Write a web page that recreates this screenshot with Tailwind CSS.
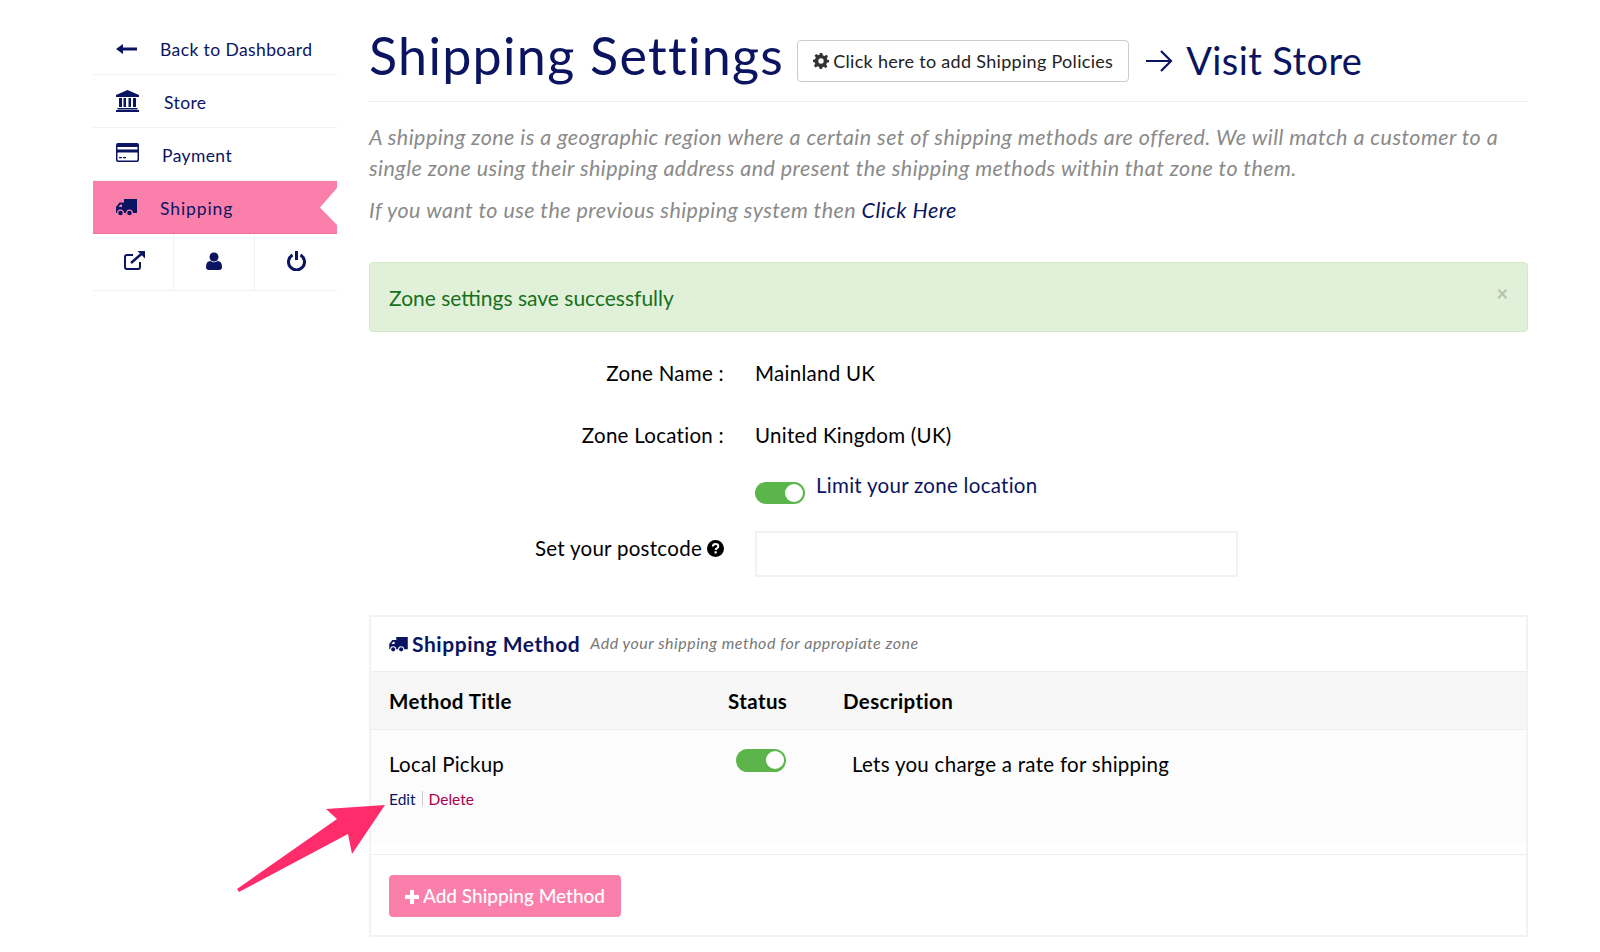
<!DOCTYPE html>
<html lang="en">
<head>
    <meta charset="UTF-8">
    <title>Shipping Settings</title>
    <script src="https://cdn.jsdelivr.net/npm/@tailwindcss/browser@4"></script>
</head>
<body class="bg-white font-['Lato','Liberation_Sans',sans-serif] text-[#000] h-[952px] overflow-hidden relative">
    <div class="flex pl-[93px]">
        <!-- sidebar -->
        <div class="w-[244px] pt-[24px] text-[#0b1460] text-[17.5px] tracking-[0.4px] shrink-0">
            <div class="h-[51px] border-b border-[#f2f2f2] flex items-center pl-[23px]">
                <svg class="w-[21px] h-[12px] mr-[23px]" viewBox="0 0 21 12" fill="#0b1460"><path d="M0 6 L7 1 V4.500 H21 V7.500 H7 V11 Z"/></svg>
                <span class="mt-[2px]">Back to Dashboard</span>
            </div>
            <div class="h-[53px] border-b border-[#f2f2f2] flex items-center pl-[23px]">
                <svg class="w-[23px] h-[22px] mr-[25px]" viewBox="0 0 23 22" fill="#0b1460"><path d="M11.500 0 L23 5 V7 H0 V5 Z M3 8 H6 V17 H3 Z M7.500 8 H10 V17 H7.500 Z M12.500 8 H15 V17 H12.500 Z M17 8 H20 V17 H17 Z M1.500 18 H21.500 V19.500 H1.500 Z M0 20 H23 V22 H0 Z"/></svg>
                <span class="mt-[4px]">Store</span>
            </div>
            <div class="h-[53px] border-b border-[#f2f2f2] flex items-center pl-[23px]">
                <svg class="w-[23px] h-[19px] mr-[23px] -mt-[3px]" viewBox="0 0 23 19" fill="#0b1460"><path fill-rule="evenodd" d="M2 0 H21 A2 2 0 0 1 23 2 V17 A2 2 0 0 1 21 19 H2 A2 2 0 0 1 0 17 V2 A2 2 0 0 1 2 0 Z M1.500 4 V6.500 H21.500 V4 Z M1.500 9.500 V16.500 A1 1 0 0 0 2.500 17.500 H20.500 A1 1 0 0 0 21.500 16.500 V9.500 Z M3 14 H6 V15.200 H3 Z M7 14 H10 V15.200 H7 Z"/></svg>
                <span class="mt-[4px]">Payment</span>
            </div>
            <div class="h-[53px] bg-[#fa80ab] border-b border-[#ef6f9c] flex items-center pl-[23px] [clip-path:polygon(0_0,100%_0,100%_7px,calc(100%-17px)_50%,100%_44px,100%_100%,0_100%)]">
                <svg class="w-[21px] h-[17px] mr-[23px]" viewBox="0 0 21 17" fill="#0b1460"><path d="M8 0 H21 V14 H17 A3.500 3.500 0 0 0 10 14 H8 A3.500 3.500 0 0 0 1 14 H0 V8 L3.500 3.500 H8 Z M2.500 8 H6 V5.500 H4.500 Z" fill-rule="evenodd"/><circle cx="4.500" cy="14" r="2.300"/><circle cx="13.500" cy="14" r="2.300"/></svg>
                <span class="mt-[4px] tracking-[0.9px]">Shipping</span>
            </div>
            <div class="h-[57px] border-b border-[#f2f2f2] flex">
                <div class="w-[81px] border-r border-[#f2f2f2] flex items-center justify-center pb-[5px] pl-[3px]">
                    <svg class="w-[22px] h-[20px]" viewBox="0 0 22 20" fill="none" stroke="#0b1460" stroke-width="2"><path d="M16 12 V17 A2 2 0 0 1 14 19 H3 A2 2 0 0 1 1 17 V7 A2 2 0 0 1 3 5 H9"/><path d="M7 13 L19 2.500" stroke-width="2.500"/><path d="M13.500 1 H21 V8.500 Z" fill="#0b1460" stroke="none"/></svg>
                </div>
                <div class="w-[81px] border-r border-[#f2f2f2] flex items-center justify-center pb-[3px]">
                    <svg class="w-[16px] h-[18px]" viewBox="0 0 16 18" fill="#0b1460"><circle cx="8" cy="5" r="4.500"/><path d="M0 15 Q0 9 4.500 9 Q8 11.500 11.500 9 Q16 9 16 15 Q16 18 13 18 H3 Q0 18 0 15 Z"/></svg>
                </div>
                <div class="flex-1 flex items-center justify-center pb-[3px]">
                    <svg class="w-[19px] h-[21px]" viewBox="0 0 19 21" fill="none" stroke="#0b1460" stroke-width="3"><path d="M5.500 5 A8 8 0 1 0 13.500 5"/><path d="M9.500 1 V10"/></svg>
                </div>
            </div>
        </div>

        <!-- main -->
        <div class="w-[1159px] ml-[32px] shrink-0">
            <div class="h-[102px] border-b border-[#eeeeee] flex items-start text-[#0b1460]">
                <h1 class="text-[52px] tracking-[1.3px] leading-[56px] mt-[27px] mr-[13px]">Shipping Settings</h1>
                <button class="mt-[40px] h-[42px] w-[332px] bg-white border border-[#cccccc] rounded-[4px] text-[#222] text-[18px] tracking-[0.3px] flex items-center justify-center gap-[4px]">
                    <svg class="w-[16px] h-[16px]" viewBox="0 0 16 16" fill="#333"><path fill-rule="evenodd" d="M6.700 0 H9.300 L9.800 2.200 L11.500 2.900 L13.400 1.700 L15 3.300 L13.800 5.200 L14.500 6.900 L16 7 V9.300 L13.900 9.800 L13.200 11.500 L14.400 13.400 L12.700 15 L10.800 13.800 L9.300 14.400 L9 16 H6.700 L6.200 13.900 L4.500 13.200 L2.600 14.400 L1 12.700 L2.200 10.800 L1.500 9.300 L0 9 V6.700 L2.100 6.200 L2.800 4.500 L1.600 2.600 L3.300 1 L5.200 2.200 L6.700 1.600 Z M8 5.300 A2.700 2.700 0 1 0 8 10.700 A2.700 2.700 0 1 0 8 5.300 Z"/></svg>
                    Click here to add Shipping Policies
                </button>
                <svg class="w-[28px] h-[24px] ml-[16px] mt-[49px]" viewBox="0 0 28 24" fill="none" stroke="#0b1460" stroke-width="2.200"><path d="M1 12 H26 M16 2 L26 12 L16 22"/></svg>
                <span class="text-[38px] tracking-[0.4px] leading-[44px] ml-[13px] mt-[38px]">Visit Store</span>
            </div>

            <div class="pt-[20px] text-[21.5px] tracking-[0.45px] italic text-[#8a8a8a] leading-[30.5px]">
                <p>A shipping zone is a geographic region where a certain set of shipping methods are offered. We will match a customer to a<br>single zone using their shipping address and present the shipping methods within that zone to them.</p>
                <p class="mt-[12px]">If you want to use the previous shipping system then <span class="text-[#0b1460]">Click Here</span></p>
            </div>

            <div class="mt-[36px] h-[70px] bg-[#e1f0d8] border border-[#d6e9c6] rounded-[4px] text-[#17701c] text-[21px] flex items-center justify-between pl-[19px] pr-[19px]">
                <span class="mt-[3px]">Zone settings save successfully</span>
                <span class="text-[#b3c4ac] text-[20px] font-bold -mt-[8px]">×</span>
            </div>

            <div class="text-[20.5px] tracking-[0.28px]">
                <div class="flex mt-[26px] h-[32px] items-center">
                    <div class="w-[355px] text-right">Zone Name :</div>
                    <div class="ml-[31px]">Mainland UK</div>
                </div>
                <div class="flex mt-[30px] h-[32px] items-center">
                    <div class="w-[355px] text-right">Zone Location :</div>
                    <div class="ml-[31px]">United Kingdom (UK)</div>
                </div>
                <div class="flex mt-[18px] ml-[386px] h-[32px] text-[#0b1460]">
                    <div class="w-[50px] h-[22px] mt-[12px] bg-[#5cb54a] rounded-full flex justify-end items-center pr-[2px]"><span class="w-[18px] h-[18px] bg-white rounded-full"></span></div>
                    <span class="ml-[11px]">Limit your zone location</span>
                </div>
                <div class="flex mt-[30px] items-start">
                    <div class="w-[355px] flex justify-end items-center gap-[5px] h-[32px] pt-[2px]">Set your postcode
                        <svg class="w-[17px] h-[17px]" viewBox="0 0 17 17"><circle cx="8.500" cy="8.500" r="8.500" fill="#000"/><path d="M5.800 6.500 Q6 4 8.500 4 Q11.300 4 11.300 6.200 Q11.300 7.500 9.800 8.300 Q8.700 8.900 8.700 10" fill="none" stroke="#fff" stroke-width="2"/><rect x="7.500" y="11.300" width="2.300" height="2.200" fill="#fff"/></svg>
                    </div>
                    <div class="ml-[31px] w-[483px] h-[46px] border-2 border-[#f2f2f2] -mt-[1px]"></div>
                </div>
            </div>

            <div class="mt-[38px] border-2 border-[#f2f2f2] h-[322px] flex flex-col">
                <div class="h-[55px] border-b border-[#eeeeee] flex items-center pl-[18px] shrink-0">
                    <svg class="w-[19px] h-[15px] mr-[4px] mt-[2px]" viewBox="0 0 21 17" fill="#0b1460"><path d="M8 0 H21 V14 H17 A3.500 3.500 0 0 0 10 14 H8 A3.500 3.500 0 0 0 1 14 H0 V8 L3.500 3.500 H8 Z M2.500 8 H6 V5.500 H4.500 Z" fill-rule="evenodd"/><circle cx="4.500" cy="14" r="2.300"/><circle cx="13.500" cy="14" r="2.300"/></svg>
                    <span class="text-[#0b1460] text-[21px] tracking-[0.55px] font-bold">Shipping Method</span>
                    <span class="text-[#777] text-[16px] tracking-[0.5px] italic ml-[10px] -mt-[2px]">Add your shipping method for appropiate zone</span>
                </div>
                <div class="h-[58px] bg-[#f7f7f7] border-b border-[#eeeeee] flex items-center pl-[18px] pt-[2px] font-bold text-[20.5px] tracking-[0.4px] shrink-0">
                    <div class="w-[339px]">Method Title</div>
                    <div class="w-[115px]">Status</div>
                    <div>Description</div>
                </div>
                <div class="h-[125px] border-b border-[#eeeeee] shrink-0">
                    <div class="h-[113px] bg-[#fcfcfc] pl-[18px] flex items-start text-[20.5px] tracking-[0.28px] relative">
                        <div class="w-[347px] pt-[19px] leading-[30px]">Local Pickup</div>
                        <div class="w-[50px] h-[23px] mt-[19px] bg-[#5cb54a] rounded-full flex justify-end items-center pr-[2px]"><span class="w-[18px] h-[18px] bg-white rounded-full"></span></div>
                        <div class="ml-[66px] pt-[19px] leading-[30px]">Lets you charge a rate for shipping</div>
                        <div class="absolute left-[18px] top-[58px] text-[15.5px] tracking-normal leading-[22px] flex items-center">
                            <span class="text-[#0b1460]">Edit</span>
                            <span class="w-px h-[15px] bg-[#cccccc] mx-[6px]"></span>
                            <span class="text-[#a8004f]">Delete</span>
                        </div>
                    </div>
                </div>
                <div class="flex-1 pl-[18px] pt-[20px]">
                    <button class="w-[232px] h-[42px] bg-[#fa80ab] rounded-[4px] text-white text-[19px] font-medium pt-[2px] flex items-center justify-center gap-[4px]">
                        <svg class="w-[14px] h-[14px]" viewBox="0 0 14 14" fill="#fff"><path d="M5 0 H9 V5 H14 V9 H9 V14 H5 V9 H0 V5 H5 Z"/></svg>
                        Add Shipping Method
                    </button>
                </div>
            </div>
        </div>
    </div>

    <!-- annotation arrow -->
    <svg class="absolute left-0 top-0 pointer-events-none" width="1600" height="952" viewBox="0 0 1600 952">
        <polygon points="385,805 326,809 337,819 237,889 239,892 348,834 352,854" fill="#fe2c6b"/>
    </svg>
</body>
</html>
